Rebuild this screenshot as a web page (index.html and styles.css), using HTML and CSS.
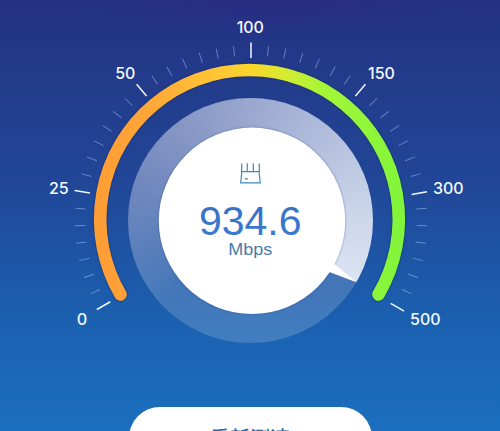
FILE: index.html
```
<!DOCTYPE html>
<html lang="zh-CN">
<head>
<meta charset="utf-8">
<title>934.6 Mbps</title>
<link rel="stylesheet" href="styles.css">
</head>
<body>
<main class="screen">
  <section class="gauge">
    <div class="ring"></div>
    <svg class="dial" viewBox="0 0 500 407" width="500" height="407">
      <defs>
        <linearGradient id="arc" gradientUnits="userSpaceOnUse" x1="94" y1="0" x2="405" y2="0">
          <stop offset="0" stop-color="#ff9c35"/>
          <stop offset=".17" stop-color="#ffa638"/>
          <stop offset=".4" stop-color="#ffc735"/>
          <stop offset=".51" stop-color="#fbd72b"/>
          <stop offset=".62" stop-color="#d2ec31"/>
          <stop offset=".74" stop-color="#a5f638"/>
          <stop offset="1" stop-color="#7ff53b"/>
        </linearGradient>
        <linearGradient id="value" x1="0" y1="0" x2="0" y2="1">
          <stop offset="0" stop-color="#356fc0"/>
          <stop offset="1" stop-color="#3d7bd6"/>
        </linearGradient>
        <path id="major" d="M251 42.5V58"/>
      </defs>
      <path class="minor" pathLength="42" d="M102.9 306.8A171 171 0 1 1 399.1 306.8"/>
      <g class="majors">
        <use href="#major" transform="rotate(-120 251 220.5)"/>
        <use href="#major" transform="rotate(-80 251 221.5)"/>
        <use href="#major" transform="rotate(-40 251 220.5)"/>
        <use href="#major"/>
        <use href="#major" transform="rotate(40 251 220.5)"/>
        <use href="#major" transform="rotate(80 250 222)"/>
        <use href="#major" transform="rotate(120 250 221)"/>
      </g>
      <path class="arc" d="M120.5 294.5A149.3 149.3 0 1 1 378.5 294.5"/>
      <circle class="hub" cx="252" cy="220.8" r="93.2"/>
      <path class="needle" d="M333 263L357 282.6L329.3 272L320 270Z"/>
      <g class="labels">
        <text x="82" y="325" textLength="10.5" lengthAdjust="spacingAndGlyphs">0</text>
        <text x="58.8" y="194">25</text>
        <text x="125.3" y="78.5">50</text>
        <text x="250.3" y="33">100</text>
        <text x="381.5" y="78.5">150</text>
        <text x="448.3" y="194">300</text>
        <text x="425.3" y="325">500</text>
      </g>
      <g class="router">
        <path d="M241.8 171.7H259L260.3 182.8H240.7Z"/>
        <path d="M241.7 163.5V172M247.3 163.2V171.5M253.3 163.2V171.5M259.3 163.5V172M244.8 178.8H248"/>
      </g>
      <text class="speed" x="199" y="235.2" textLength="102.5" lengthAdjust="spacingAndGlyphs">934.6</text>
      <text class="unit" x="228.3" y="254.5" textLength="44" lengthAdjust="spacingAndGlyphs">Mbps</text>
    </svg>
  </section>
  <button class="retest">重新测速</button>
</main>
</body>
</html>
```
FILE: styles.css
```
body {
  margin: 0;
  overflow: hidden;
}

.screen {
  display: flex;
  flex-direction: column;
  align-items: center;
  height: 431px;
  overflow: hidden;
  background:
    radial-gradient(ellipse 200px 30px at 55% 0, rgba(48, 35, 125, .4), transparent),
    linear-gradient(#233184 0, #233b8b 80px, #214697 180px, #1e55a5 260px, #1b62b2 330px, #1b6fbe 431px);
}

.gauge {
  display: grid;
  flex: none;
  width: 500px;
  height: 407px;
}

.ring,
.dial {
  grid-area: 1 / 1;
}

.ring {
  width: 245px;
  height: 245px;
  margin: 98px 0 0 128px;
  border-radius: 50%;
  background:
    conic-gradient(
      rgba(215, 222, 240, .58) 0deg,
      rgba(218, 225, 241, .74) 45deg,
      rgba(225, 230, 243, .88) 90deg,
      rgba(230, 235, 247, .93) 120deg,
      transparent 120deg,
      transparent 225deg,
      rgba(205, 210, 235, .24) 270deg,
      rgba(210, 216, 238, .42) 315deg,
      rgba(215, 222, 240, .58) 360deg),
    rgba(255, 255, 255, .17);
}

.minor {
  fill: none;
  stroke: rgba(160, 190, 240, .55);
  stroke-width: 10.5;
  stroke-dasharray: .055 .945 .055 .945 .055 .945 .055 .945 .055 .945 .055 1.945;
  stroke-dashoffset: -.9725;
}

.majors {
  stroke: #f2f8ff;
  stroke-width: 1.5;
}

.arc {
  fill: none;
  stroke: url(#arc);
  stroke-width: 12.6;
  stroke-linecap: round;
  filter: drop-shadow(0 0 1px rgba(10, 25, 80, .6));
}

.hub {
  fill: #fff;
  filter: drop-shadow(0 0 1px rgba(30, 60, 120, .5));
}

.needle {
  fill: #fff;
}

.labels {
  fill: #f5f9ff;
  font: 500 16px Inter, sans-serif;
  text-anchor: middle;
}

.router {
  fill: none;
  stroke: #4389b5;
  stroke-width: 1.2;
}

.speed {
  fill: url(#value);
  font: 40.5px "Liberation Sans", sans-serif;
}

.unit {
  fill: #4b7ba9;
  font: 17px "Liberation Sans", sans-serif;
}

.retest {
  flex: none;
  width: 243px;
  height: 62px;
  padding: 0;
  border: 0;
  border-radius: 31px;
  background: #fff;
  color: #2c68a8;
  font: 500 20px/62px "Noto Sans CJK SC", sans-serif;
}
```
